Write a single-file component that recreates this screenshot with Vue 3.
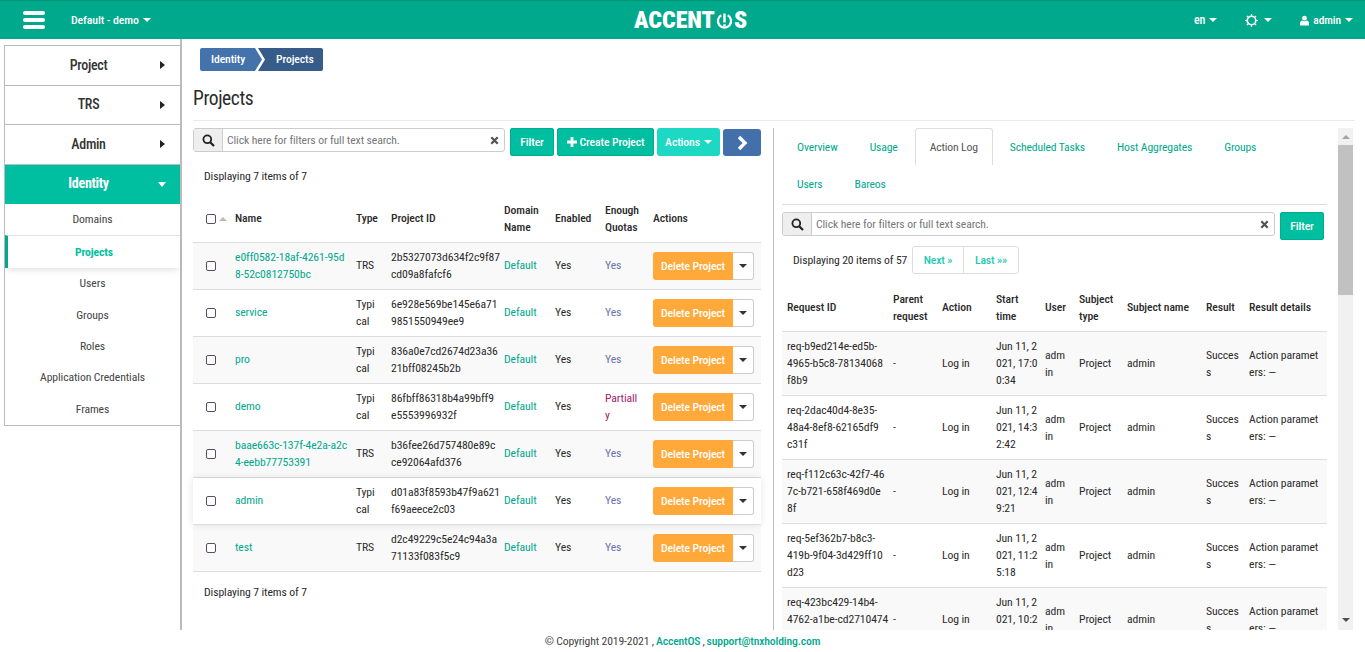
<script setup>
const mainMenu = ['Project', 'TRS', 'Admin']
const subMenu = ['Domains', 'Projects', 'Users', 'Groups', 'Roles', 'Application Credentials', 'Frames']
const projects = [
  { name: 'e0ff0582-18af-4261-95d\n8-52c0812750bc', type: 'TRS', id: '2b5327073d634f2c9f87\ncd09a8fafcf6', q: 'Yes' },
  { name: 'service', type: 'Typi\ncal', id: '6e928e569be145e6a71\n9851550949ee9', q: 'Yes' },
  { name: 'pro', type: 'Typi\ncal', id: '836a0e7cd2674d23a36\n21bff08245b2b', q: 'Yes' },
  { name: 'demo', type: 'Typi\ncal', id: '86fbff86318b4a99bff9\ne5553996932f', q: 'Partiall\ny' },
  { name: 'baae663c-137f-4e2a-a2c\n4-eebb77753391', type: 'TRS', id: 'b36fee26d757480e89c\nce92064afd376', q: 'Yes' },
  { name: 'admin', type: 'Typi\ncal', id: 'd01a83f8593b47f9a621\nf69aeece2c03', q: 'Yes', hover: true },
  { name: 'test', type: 'TRS', id: 'd2c49229c5e24c94a3a\n71133f083f5c9', q: 'Yes' }
]
const tabs = ['Overview', 'Usage', 'Action Log', 'Scheduled Tasks', 'Host Aggregates', 'Groups', 'Users', 'Bareos']
const logs = [
  { id: 'req-b9ed214e-ed5b-\n4965-b5c8-78134068\nf8b9', t: 'Jun 11, 2\n021, 17:0\n0:34' },
  { id: 'req-2dac40d4-8e35-\n48a4-8ef8-62165df9\nc31f', t: 'Jun 11, 2\n021, 14:3\n2:42' },
  { id: 'req-f112c63c-42f7-46\n7c-b721-658f469d0e\n8f', t: 'Jun 11, 2\n021, 12:4\n9:21' },
  { id: 'req-5ef362b7-b8c3-\n419b-9f04-3d429ff10\nd23', t: 'Jun 11, 2\n021, 11:2\n5:18' },
  { id: 'req-423bc429-14b4-\n4762-a1be-cd2710474\n\u00a0', t: 'Jun 11, 2\n021, 10:2\n\u00a0' }
]
</script>

<template>
  <div class="app">
    <header class="topbar">
      <div class="top-left">
        <div class="burger"><i></i><i></i><i></i></div>
        <span class="scope">Default - demo</span><b class="caret white"></b>
      </div>
      <div class="logo">ACCENT<svg class="logo-o" viewBox="0 0 18 18"><path d="M5.6 3.4a7 7 0 1 0 6.8 0" fill="none" stroke="#fff" stroke-width="2.4"/><path d="M9 1.5v9.5M9 13v2.4" stroke="#fff" stroke-width="2.6" fill="none"/></svg>S</div>
      <div class="top-right">
        <span class="lang">en</span><b class="caret white"></b>
        <svg class="gear" viewBox="0 0 14 14"><circle cx="7" cy="7" r="4.6" fill="none" stroke="#fff" stroke-width="1.8"/><path d="M7 0v2.4M7 11.6V14M0 7h2.4M11.6 7H14M2 2l1.7 1.7M10.3 10.3 12 12M12 2l-1.7 1.7M3.7 10.3 2 12" stroke="#fff" stroke-width="1.3"/></svg>
        <b class="caret white gear-caret"></b>
        <svg class="user" viewBox="0 0 10 11"><circle cx="5" cy="2.9" r="2.6" fill="#fff"/><path d="M0 11V8.2C0 6.5 1.3 5.6 2.6 5.4 3.2 6 4 6.3 5 6.3s1.8-.3 2.4-.9C8.700 5.600 10 6.500 10 8.200V11z" fill="#fff"/></svg>
        <span class="who">admin</span><b class="caret white"></b>
      </div>
    </header>

    <div class="body">
      <aside class="sidebar">
        <nav class="menu">
          <div v-for="m in mainMenu" :key="m" class="menu-item">{{ m }}</div>
          <div class="menu-item open">Identity</div>
          <div v-for="s in subMenu" :key="s" class="sub-item" :class="{ active: s === 'Projects' }">{{ s }}</div>
        </nav>
      </aside>

      <main class="main">
        <div class="crumbs"><span class="crumb first">Identity</span><span class="crumb second">Projects</span></div>
        <h1 class="title">Projects</h1>

        <div class="split">
          <section class="left">
            <div class="toolbar">
              <div class="search">
                <span class="addon"><svg viewBox="0 0 13 13"><circle cx="5.300" cy="5.300" r="3.900" fill="none" stroke="#222" stroke-width="1.800"/><path d="m8.200 8.200 3.800 3.800" stroke="#222" stroke-width="2.200"/></svg></span>
                <span class="ph">Click here for filters or full text search.</span>
                <svg class="clear" viewBox="0 0 9 9"><path d="m1.300 1.300 6.400 6.400M7.700 1.300 1.300 7.700" stroke="#555" stroke-width="2.300"/></svg>
              </div>
              <button class="btn teal w-filter">Filter</button>
              <button class="btn teal w-create"><svg class="plus" viewBox="0 0 10 10"><path d="M5 0v10M0 5h10" stroke="#fff" stroke-width="2.800"/></svg>Create Project</button>
              <button class="btn aqua w-actions">Actions<b class="caret white"></b></button>
              <button class="btn blue w-arrow"><svg viewBox="0 0 12 16"><path d="m3 2 6 6-6 6" fill="none" stroke="#fff" stroke-width="3.400"/></svg></button>
            </div>
            <p class="count">Displaying 7 items of 7</p>
            <table class="grid projects">
              <colgroup><col class="c1"><col class="c2"><col class="c3"><col class="c4"><col class="c5"><col class="c6"><col class="c7"><col class="c8"></colgroup>
              <thead>
                <tr>
                  <th class="check-cell"><i class="check"></i><i class="sort"></i></th>
                  <th>Name</th><th>Type</th><th>Project ID</th><th>Domain<br>Name</th><th>Enabled</th><th>Enough<br>Quotas</th><th>Actions</th>
                </tr>
              </thead>
              <tbody>
                <tr v-for="p in projects" :key="p.id" :class="{ hover: p.hover }">
                  <td class="check-cell"><i class="check"></i></td>
                  <td class="link">{{ p.name }}</td>
                  <td>{{ p.type }}</td>
                  <td>{{ p.id }}</td>
                  <td class="link">Default</td>
                  <td>Yes</td>
                  <td :class="p.q === 'Yes' ? 'yes' : 'partial'">{{ p.q }}</td>
                  <td class="act"><div class="split-btn"><span class="del">Delete Project</span><span class="more"><b class="caret dark"></b></span></div></td>
                </tr>
              </tbody>
            </table>
            <p class="count bottom">Displaying 7 items of 7</p>
          </section>

          <section class="right">
            <div class="right-scroll">
              <ul class="tabs">
                <li v-for="t in tabs" :key="t" :class="{ on: t === 'Action Log' }">{{ t }}</li>
              </ul>
              <div class="toolbar r-tool">
                <div class="search">
                  <span class="addon"><svg viewBox="0 0 13 13"><circle cx="5.300" cy="5.300" r="3.900" fill="none" stroke="#222" stroke-width="1.800"/><path d="m8.200 8.200 3.800 3.800" stroke="#222" stroke-width="2.200"/></svg></span>
                  <span class="ph">Click here for filters or full text search.</span>
                  <svg class="clear" viewBox="0 0 9 9"><path d="m1.300 1.300 6.400 6.400M7.700 1.300 1.300 7.700" stroke="#555" stroke-width="2.300"/></svg>
                </div>
                <button class="btn teal w-filter">Filter</button>
              </div>
              <div class="pager">
                <span class="pager-text">Displaying 20 items of 57</span>
                <span class="pages"><a>Next »</a><a>Last »»</a></span>
              </div>
              <table class="grid logs">
                <colgroup><col class="l1"><col class="l2"><col class="l3"><col class="l4"><col class="l5"><col class="l6"><col class="l7"><col class="l8"><col class="l9"></colgroup>
                <thead>
                  <tr><th>Request ID</th><th>Parent<br>request</th><th>Action</th><th>Start<br>time</th><th>User</th><th>Subject<br>type</th><th>Subject name</th><th>Result</th><th>Result details</th></tr>
                </thead>
                <tbody>
                  <tr v-for="l in logs" :key="l.id">
                    <td>{{ l.id }}</td><td>-</td><td>Log in</td><td>{{ l.t }}</td><td>{{ 'adm\nin' }}</td><td>Project</td><td>admin</td><td>{{ 'Succes\ns' }}</td><td>{{ 'Action paramet\ners: —' }}</td>
                  </tr>
                </tbody>
              </table>
            </div>
            <div class="scrollbar"><i class="up"></i><i class="thumb"></i><i class="down"></i></div>
          </section>
        </div>
      </main>
    </div>

    <footer class="foot">© Copyright 2019-2021 , <a>AccentOS</a> , <a>support@tnxholding.com</a></footer>
  </div>
</template>

<style>
html, body { margin: 0; background: #fff; overflow: hidden; }
</style>

<style scoped>
.app {
  height: 652px;
  display: flex;
  flex-direction: column;
  overflow: hidden;
  font-family: Roboto, "Liberation Sans", sans-serif;
  font-stretch: 75%;
  font-size: 11.700px;
  letter-spacing: -.1px;
  line-height: 17px;
  color: #2b2b2b;
}
.topbar {
  height: 39px;
  flex: none;
  box-sizing: border-box;
  border-top: 1px solid #009479;
  background: #00a88c;
  color: #fff;
  display: flex;
  align-items: center;
}
.top-left { width: 634px; display: flex; align-items: center; }
.burger { width: 22px; margin-left: 23px; margin-right: 26px; display: flex; flex-direction: column; gap: 3px; }
.burger i { height: 4px; border-radius: 2px; background: #fff; }
.scope { font-size: 11.800px; font-weight: 500; }
.caret { display: inline-block; width: 0; height: 0; border-left: 4px solid transparent; border-right: 4px solid transparent; margin-left: 4px; }
.caret.white { border-top: 4px solid #fff; }
.caret.dark { border-top: 4px solid #333; margin: 0; }
.logo { width: 113px; font-size: 24px; font-weight: 900; line-height: 20px; letter-spacing: 0; white-space: nowrap; display: flex; align-items: center; justify-content: center; }
.logo-o { width: 17px; height: 17px; flex: none; margin: 0 1px; }
.top-right { margin-left: auto; padding-right: 12px; display: flex; align-items: center; }
.lang { font-size: 12px; font-weight: 500; }
.gear { width: 13px; height: 13px; margin-left: 28px; }
.gear-caret { margin-left: 6px; }
.user { width: 9px; height: 11px; margin-left: 28px; margin-right: 4px; }
.who { font-size: 11.500px; font-weight: 500; }

.body { flex: 1; min-height: 0; display: flex; }
.sidebar { width: 178px; flex: none; margin-left: 4px; box-sizing: border-box; border-right: 2px solid #bbb; padding-top: 6px; }
.menu { border: 1px solid #bbb; border-right: 0; }
.menu-item {
  height: 38.500px;
  border-bottom: 1px solid #bbb;
  display: flex;
  align-items: center;
  justify-content: center;
  padding-right: 8px;
  font-size: 14px;
  font-weight: 500;
  letter-spacing: -.3px;
  color: #333;
  position: relative;
}
.menu-item::after { content: ""; position: absolute; left: 155px; top: 15px; border-top: 4px solid transparent; border-bottom: 4px solid transparent; border-left: 5px solid #222; }
.menu-item.open { background: #00bfa0; color: #fff; font-weight: 700; border-bottom-color: #00bfa0; }
.menu-item.open::after { left: 153px; top: 17px; border-top: 5px solid #fff; border-bottom: 0; border-left: 4px solid transparent; border-right: 4px solid transparent; }
.sub-item { height: 31.300px; display: flex; align-items: center; justify-content: center; color: #444; }
.sub-item:first-of-type { height: 31px; }
.sub-item.active { height: 33px; box-sizing: border-box; color: #00bfa0; border-left: 3px solid #00a88c; border-top: 1px solid #e2e2e2; font-weight: 700; box-shadow: 0 4px 6px -2px rgba(0,0,0,.12); }

.main { flex: 1; min-width: 0; padding: 9px 10px 0 11px; display: flex; flex-direction: column; }
.crumbs { display: flex; margin-left: 7px; height: 23px; }
.crumb { display: flex; align-items: center; color: #fff; font-weight: 500; box-sizing: border-box; }
.crumb.first { width: 62px; padding-left: 11px; background: #4472ab; border-radius: 2px 0 0 2px; clip-path: polygon(0 0, 55px 0, 100% 50%, 55px 100%, 0 100%); }
.crumb.second { width: 65px; padding-left: 18px; background: #365c8a; border-radius: 0 2px 2px 0; clip-path: polygon(0 0, 100% 0, 100% 100%, 0 100%, 7px 50%); margin-left: -4px; }
.title { margin: 0; height: 50px; box-sizing: border-box; padding-top: 16px; border-bottom: 1px solid #eaeaea; font-size: 19.500px; letter-spacing: -.4px; line-height: 23px; font-weight: 400; color: #2b2b2b; }
.split { flex: 1; min-height: 0; display: flex; padding-top: 7px; }
.left { width: 568px; flex: none; }
.toolbar { display: flex; align-items: flex-start; height: 28px; }
.search { flex: 1; height: 24px; box-sizing: border-box; border: 1px solid #ccc; border-radius: 3px; display: flex; align-items: center; margin-right: 5px; padding-right: 5px; }
.addon { width: 29px; height: 22px; flex: none; box-sizing: border-box; background: #eee; border-right: 1px solid #ccc; border-radius: 2px 0 0 2px; display: flex; align-items: center; justify-content: center; }
.addon svg { width: 13px; height: 13px; }
.ph { flex: 1; padding-left: 4px; color: #777; }
.clear { width: 9px; height: 9px; }
.btn { height: 28px; padding: 0; border: 0; border-radius: 3px; color: #fff; font: inherit; font-weight: 500; letter-spacing: -.1px; display: flex; align-items: center; justify-content: center; flex: none; }
.teal { background: #00bfa0; box-shadow: inset 0 0 0 1px #00ad91; }
.aqua { background: #1dd9c3; }
.blue { background: #436fab; }
.w-filter { width: 44px; }
.w-create { width: 97px; margin-left: 3px; }
.w-actions { width: 63px; margin-left: 3px; }
.w-arrow { width: 38px; margin-left: 3px; margin-top: 1px; height: 27px; }
.w-arrow svg { width: 12px; height: 16px; }
.plus { width: 10px; height: 10px; margin-right: 3px; }
.count { margin: 12px 0 13px 11px; height: 17px; }
.count.bottom { margin-top: 12px; }

.grid { border-collapse: separate; border-spacing: 0; table-layout: fixed; width: 100%; }
.grid th { text-align: left; font-weight: 500; padding: 3.500px 6px 6.500px; border-bottom: 1px solid #ddd; vertical-align: middle; }
.grid td { padding: 5.500px 6px 6.500px; border-bottom: 1px solid #ddd; white-space: pre; vertical-align: middle; }
.grid tbody tr:nth-child(odd) td { background: #f9f9f9; }
.c1 { width: 36px; } .c2 { width: 121px; } .c3 { width: 35px; } .c4 { width: 113px; } .c5 { width: 51px; } .c6 { width: 50px; } .c7 { width: 48px; } .c8 { width: 114px; }
.projects tr.hover td { background: #fff; }
.projects tr.hover { box-shadow: 0 0 8px rgba(0,0,0,.1); position: relative; }
.check-cell { padding-left: 13px !important; padding-right: 0 !important; }
.check { display: inline-block; vertical-align: middle; width: 8px; height: 8px; border: 1.500px solid #5b4a68; border-radius: 2px; background: #fff; }
.sort { display: inline-block; vertical-align: middle; margin-left: 3px; width: 0; height: 0; border-left: 4px solid transparent; border-right: 4px solid transparent; border-bottom: 4px solid #bbb; }
.link { color: #00a88c; }
.yes { color: #6a72b0; }
.partial { color: #a3216e; }
.act { padding: 9px 6px !important; }
.split-btn { display: flex; height: 28px; width: 101px; }
.del { width: 80px; background: #ffa93a; color: #fff; font-weight: 500; border-radius: 3px 0 0 3px; display: flex; align-items: center; justify-content: center; }
.more { width: 21px; box-sizing: border-box; border: 1px solid #ccc; border-left: 0; border-radius: 0 3px 3px 0; background: #fff; display: flex; align-items: center; justify-content: center; }

.right { flex: 1; min-width: 0; margin-left: 12px; border-left: 1px solid #bbb; padding-left: 8px; display: flex; overflow: hidden; }
.right-scroll { width: 545px; flex: none; overflow: hidden; }
.tabs { list-style: none; margin: 0; padding: 0 0 2px; display: flex; flex-wrap: wrap; border-bottom: 1px solid #ddd; height: 74px; letter-spacing: -.15px; }
.tabs li { height: 37px; box-sizing: border-box; padding: 11px 15px 0; margin-right: 2px; color: #00a88c; }
.tabs li.on { color: #555; border: 1px solid #ddd; border-bottom: 0; border-radius: 3px 3px 0 0; padding: 10px 14px 0; background: #fff; }
.r-tool { margin-top: 7px; padding-right: 3px; }
.r-tool .search { margin-right: 5px; }
.pager { display: flex; align-items: center; margin-top: 6px; padding-left: 11px; height: 28px; }
.pager-text { width: 119px; white-space: nowrap; }
.pages { display: flex; height: 28px; box-sizing: border-box; border: 1px solid #ddd; border-radius: 3px; color: #1dc9b0; font-weight: 500; }
.pages a { display: flex; align-items: center; justify-content: center; width: 50px; }
.pages a + a { width: 54px; border-left: 1px solid #ddd; }
.logs { margin-top: 13px; }
.logs th { padding: 3.500px 5px 6.500px; }
.logs td { padding: 6px 5px; }
.l1 { width: 106px; } .l2 { width: 49px; } .l3 { width: 54px; } .l4 { width: 49px; } .l5 { width: 34px; } .l6 { width: 48px; } .l7 { width: 79px; } .l8 { width: 43px; } .l9 { width: 83px; }
.scrollbar { width: 15px; flex: none; margin-left: 11px; background: #f1f1f1; display: flex; flex-direction: column; align-items: center; }
.scrollbar i { display: block; }
.up { margin-top: 7px; border-left: 4px solid transparent; border-right: 4px solid transparent; border-bottom: 4px solid #a3a3a3; margin-bottom: 6px; }
.thumb { width: 15px; height: 150px; background: #c1c1c1; }
.down { margin-top: auto; margin-bottom: 8px; border-left: 4px solid transparent; border-right: 4px solid transparent; border-top: 4px solid #505050; }

.foot { height: 22px; flex: none; display: flex; align-items: center; justify-content: center; gap: 2px; letter-spacing: -.15px; background: #fff; color: #444; }
.foot a { color: #00a88c; font-weight: 500; }
</style>
